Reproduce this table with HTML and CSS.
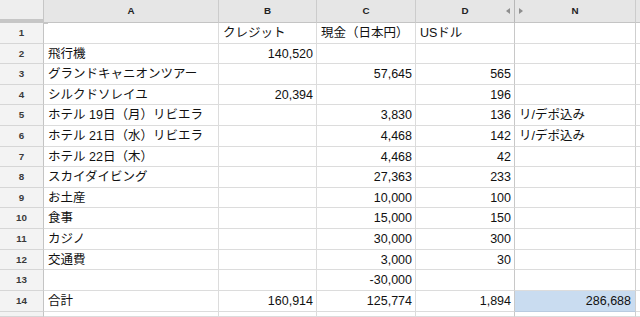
FILE: index.html
```html
<!DOCTYPE html>
<html lang="ja">
<head>
<meta charset="utf-8">
<title>Sheet</title>
<link rel="stylesheet" href="styles.css">
</head>
<body>
<div class="sheet">
  <!-- header row -->
  <div class="corner"></div>
  <div class="ch">A</div>
  <div class="ch">B</div>
  <div class="ch">C</div>
  <div class="ch ch-d">D<span class="arrow-l"></span></div>
  <div class="ch ch-n"><span class="arrow-r"></span>N</div>
  <div class="ch ch-rest"></div>

  <!-- 1 -->
  <div class="rh">1</div>
  <div class="c"></div>
  <div class="c">クレジット</div>
  <div class="c">現金（日本円）</div>
  <div class="c cd">USドル</div>
  <div class="c cn"></div>
  <div class="c cr"></div>

  <!-- 2 -->
  <div class="rh">2</div>
  <div class="c">飛行機</div>
  <div class="c num">140,520</div>
  <div class="c"></div>
  <div class="c cd"></div>
  <div class="c cn"></div>
  <div class="c cr"></div>

  <!-- 3 -->
  <div class="rh">3</div>
  <div class="c">グランドキャニオンツアー</div>
  <div class="c"></div>
  <div class="c num">57,645</div>
  <div class="c cd num">565</div>
  <div class="c cn"></div>
  <div class="c cr"></div>

  <!-- 4 -->
  <div class="rh">4</div>
  <div class="c">シルクドソレイユ</div>
  <div class="c num">20,394</div>
  <div class="c"></div>
  <div class="c cd num">196</div>
  <div class="c cn"></div>
  <div class="c cr"></div>

  <!-- 5 -->
  <div class="rh">5</div>
  <div class="c">ホテル 19日（月）リビエラ</div>
  <div class="c"></div>
  <div class="c num">3,830</div>
  <div class="c cd num">136</div>
  <div class="c cn">リ/デポ込み</div>
  <div class="c cr"></div>

  <!-- 6 -->
  <div class="rh">6</div>
  <div class="c">ホテル 21日（水）リビエラ</div>
  <div class="c"></div>
  <div class="c num">4,468</div>
  <div class="c cd num">142</div>
  <div class="c cn">リ/デポ込み</div>
  <div class="c cr"></div>

  <!-- 7 -->
  <div class="rh">7</div>
  <div class="c">ホテル 22日（木）</div>
  <div class="c"></div>
  <div class="c num">4,468</div>
  <div class="c cd num">42</div>
  <div class="c cn"></div>
  <div class="c cr"></div>

  <!-- 8 -->
  <div class="rh">8</div>
  <div class="c">スカイダイビング</div>
  <div class="c"></div>
  <div class="c num">27,363</div>
  <div class="c cd num">233</div>
  <div class="c cn"></div>
  <div class="c cr"></div>

  <!-- 9 -->
  <div class="rh">9</div>
  <div class="c">お土産</div>
  <div class="c"></div>
  <div class="c num">10,000</div>
  <div class="c cd num">100</div>
  <div class="c cn"></div>
  <div class="c cr"></div>

  <!-- 10 -->
  <div class="rh">10</div>
  <div class="c">食事</div>
  <div class="c"></div>
  <div class="c num">15,000</div>
  <div class="c cd num">150</div>
  <div class="c cn"></div>
  <div class="c cr"></div>

  <!-- 11 -->
  <div class="rh">11</div>
  <div class="c">カジノ</div>
  <div class="c"></div>
  <div class="c num">30,000</div>
  <div class="c cd num">300</div>
  <div class="c cn"></div>
  <div class="c cr"></div>

  <!-- 12 -->
  <div class="rh">12</div>
  <div class="c">交通費</div>
  <div class="c"></div>
  <div class="c num">3,000</div>
  <div class="c cd num">30</div>
  <div class="c cn"></div>
  <div class="c cr"></div>

  <!-- 13 -->
  <div class="rh">13</div>
  <div class="c"></div>
  <div class="c"></div>
  <div class="c num">-30,000</div>
  <div class="c cd"></div>
  <div class="c cn"></div>
  <div class="c cr"></div>

  <!-- 14 -->
  <div class="rh">14</div>
  <div class="c">合計</div>
  <div class="c num">160,914</div>
  <div class="c num">125,774</div>
  <div class="c cd num">1,894</div>
  <div class="c cn num sel">286,688</div>
  <div class="c cr"></div>

  <!-- 15 (partial) -->
  <div class="rh"></div>
  <div class="c"></div>
  <div class="c"></div>
  <div class="c"></div>
  <div class="c cd"></div>
  <div class="c cn"></div>
  <div class="c cr"></div>
</div>
</body>
</html>
```
FILE: styles.css
```css
* { box-sizing: border-box; }

html, body {
  margin: 0;
  padding: 0;
  background: #ffffff;
}

.sheet {
  width: 640px;
  height: 317px;
  overflow: hidden;
  display: grid;
  grid-template-columns: 44px 175px 98px 99px 99px 121px 1fr;
  grid-template-rows: 23px repeat(14, 20.62px) 1fr;
  font-family: "Liberation Sans", Arial, "Noto Sans CJK JP", sans-serif;
  color: #111111;
}

.corner {
  background: #e6e6e6;
  border-right: 1px solid #c4c4c4;
  border-bottom: 1px solid #c4c4c4;
}

.corner::before {
  content: "";
  display: block;
  width: 43px;
  height: 19px;
  background: #eeeeee;
  border-right: 5px solid #c6c6c6;
  border-bottom: 5px solid #c6c6c6;
}

.ch {
  position: relative;
  background: #e6e6e6;
  border-right: 1px solid #cccccc;
  border-bottom: 1px solid #c4c4c4;
  font-size: 9.8px;
  font-weight: bold;
  color: #222222;
  line-height: 22px;
  text-align: center;
}

.ch-d {
  border-right-color: #b8b8b8;
}

.ch-rest {
  border-right: none;
}

.arrow-l {
  position: absolute;
  right: 4px;
  top: 8px;
  width: 0;
  height: 0;
  border-top: 3px solid transparent;
  border-bottom: 3px solid transparent;
  border-right: 4px solid #8f8f8f;
}

.arrow-r {
  position: absolute;
  left: 4px;
  top: 8px;
  width: 0;
  height: 0;
  border-top: 3px solid transparent;
  border-bottom: 3px solid transparent;
  border-left: 4px solid #8f8f8f;
}

.rh {
  background: #f3f3f3;
  border-right: 1px solid #c4c4c4;
  border-bottom: 1px solid #d6d6d6;
  font-size: 9.8px;
  font-weight: bold;
  color: #3a3a3a;
  line-height: 20px;
  text-align: center;
}

.c {
  border-right: 1px solid #dcdcdc;
  border-bottom: 1px solid #dcdcdc;
  font-size: 12.5px;
  line-height: 20px;
  padding: 0 3px 0 4px;
  white-space: nowrap;
  overflow: hidden;
}

.cd {
  border-right-color: #c8c8c8;
}

.cn {
  border-right-color: #cfcfcf;
}

.cr {
  border-right: none;
}

.num {
  text-align: right;
}

.sel {
  background: #c9dcf0;
  border-bottom-color: #b9cbe0;
  padding-right: 4px;
}
```
